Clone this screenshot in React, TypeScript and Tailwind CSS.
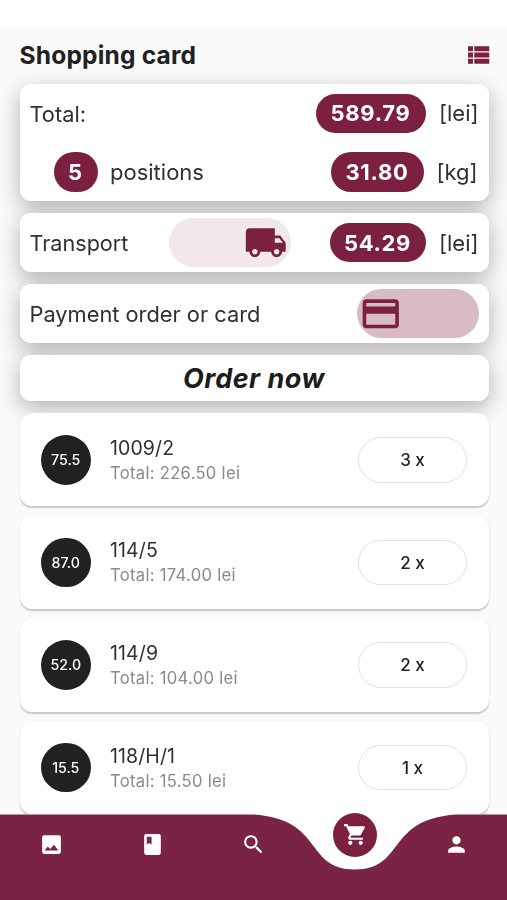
import type { ReactNode } from 'react';
import { MdSearch, MdShoppingCart, MdPerson, MdLocalShipping, MdPayment } from 'react-icons/md';

interface CartItem {
    price: string;
    code: string;
    total: string;
    count: number;
}

const items: CartItem[] = [
    { price: '75.5', code: '1009/2', total: '226.50', count: 3 },
    { price: '87.0', code: '114/5', total: '174.00', count: 2 },
    { price: '52.0', code: '114/9', total: '104.00', count: 2 },
    { price: '15.5', code: '118/H/1', total: '15.50', count: 1 },
];

function Pill({ children, className }: { children: ReactNode; className: string }) {
    return (
        <span
            className={`flex h-[39.4px] items-center justify-center rounded-full bg-[#7b2040] pt-px text-[22px] font-bold tracking-[0.7px] text-white ${className}`}
        >
            {children}
        </span>
    );
}

function Panel({ children, className }: { children: ReactNode; className: string }) {
    return <div className={`rounded-[11px] bg-white pl-[10px] ${className}`}>{children}</div>;
}

function CartRow({ item }: { item: CartItem }) {
    return (
        <div className="flex h-[93px] shrink-0 items-center rounded-[12px] bg-white pr-[21.5px] pl-[21.5px] shadow-[0_1.5px_1.5px_rgba(0,0,0,0.2),0_0_2px_rgba(0,0,0,0.06)]">
            <div className="flex size-[49.5px] items-center justify-center rounded-full bg-[#212121] text-[14.2px] font-medium text-white">
                {item.price}
            </div>
            <div className="ml-[19.5px] flex-1 pt-[2px]">
                <div className="text-[19.5px] leading-[25px] tracking-[0.1px] text-[#303030]">{item.code}</div>
                <div className="text-[16.6px] leading-[25px] tracking-[0.3px] text-[#8a8a8a]">
                    Total: {item.total} lei
                </div>
            </div>
            <button className="h-[45.5px] w-[109px] rounded-full border border-[#e0e0e0] pt-[2px] text-[17px] font-medium text-[#212121]">
                {item.count} x
            </button>
        </div>
    );
}

function ImageIcon() {
    return (
        <svg width="25" height="25" viewBox="0 0 24 24" fill="currentColor" fillRule="evenodd">
            <path d="M5 3h14a2 2 0 0 1 2 2v14a2 2 0 0 1-2 2H5a2 2 0 0 1-2-2V5a2 2 0 0 1 2-2zM5.3 17.8h13.2l-4.1-5.6-3.6 4.2-2.3-2.5z" />
        </svg>
    );
}

function BookIcon() {
    return (
        <svg width="25" height="25" viewBox="0 0 24 24" fill="currentColor" fillRule="evenodd">
            <path d="M6 2h12a2 2 0 0 1 2 2v16a2 2 0 0 1-2 2H6a2 2 0 0 1-2-2V4a2 2 0 0 1 2-2zM6.5 4.5v7.6l2.3-1.6 2.3 1.6V4.5z" />
        </svg>
    );
}

function BottomNav() {
    return (
        <nav className="relative h-[86px] shrink-0 bg-white">
            <svg className="absolute inset-0" width="507" height="86" viewBox="0 0 507 86">
                <path
                    fill="#7b2344"
                    d="M0 .4H253.5C324.5 5 304.2 55.4 354.9 55.4S385.3 5 456.3 .4H507V86H0Z"
                />
            </svg>
            <div className="relative grid grid-cols-5 justify-items-center pt-[18px] pl-[1px] text-white">
                <ImageIcon />
                <BookIcon />
                <MdSearch size={25} />
                <div className="-mt-[19.5px] flex size-[44px] items-center justify-center rounded-full bg-[#7b2040]">
                    <MdShoppingCart size={25} />
                </div>
                <MdPerson size={25} />
            </div>
        </nav>
    );
}

export default function App() {
    return (
        <div className="flex h-[900px] w-[507px] flex-col overflow-hidden bg-[#fafafa] font-[Inter,'Liberation_Sans',sans-serif] text-[#303030]">
            {/* Status bar area */}
            <div className="h-[26px] shrink-0 bg-white" />

            <header className="flex h-[58px] shrink-0 items-center justify-between pr-[14px] pl-[19.5px]">
                <h1 className="text-[24.5px] font-bold tracking-[0.2px] text-[#212121]">Shopping card</h1>
                <svg className="-mt-px" width="30" height="30" viewBox="0 0 24 24" fill="#7b2040">
                    <path d="M4 14h4v-4H4v4zm0 5h4v-4H4v4zM4 9h4V5H4v4zm5 5h12v-4H9v4zm0 5h12v-4H9v4zM9 5v4h12V5H9z" />
                </svg>
            </header>

            <main className="flex h-[730px] shrink-0 flex-col pt-[0.2px] pr-[18.5px] pl-[19.5px] text-[22px]">
                {/* One shadow for the whole group, so it never falls on a panel */}
                <section className="flex shrink-0 flex-col gap-[12px] drop-shadow-[0_7px_11px_rgba(0,0,0,0.29)]">
                    <Panel className="h-[117.2px]">
                        <div className="flex h-[58.6px] items-center">
                            <span className="pt-px text-[21.8px]">Total:</span>
                            <Pill className="ml-auto w-[110px]">589.79</Pill>
                            <span className="ml-[13.5px] w-[49.5px] pt-px">[lei]</span>
                        </div>
                        <div className="flex h-[58.6px] items-center">
                            <Pill className="ml-[24px] w-[44px]">5</Pill>
                            <span className="ml-[12.5px] pt-px">positions</span>
                            <Pill className="ml-auto w-[93px]">31.80</Pill>
                            <span className="ml-[13px] w-[52px] pt-px">[kg]</span>
                        </div>
                    </Panel>

                    <Panel className="flex h-[58.6px] items-center">
                        <span className="w-[139px] pt-px text-[21.6px]">Transport</span>
                        <div className="flex h-[48.5px] w-[122px] items-center justify-end rounded-full bg-[#f2e8ec] pt-px pr-[3px]">
                            <MdLocalShipping size={43.5} color="#7b2040" />
                        </div>
                        <Pill className="ml-auto w-[96px]">54.29</Pill>
                        <span className="ml-[13.5px] w-[49.5px] pt-px">[lei]</span>
                    </Panel>

                    <Panel className="flex h-[58.6px] items-center justify-between pr-[10px]">
                        <span className="pt-[2px] text-[21.8px]">Payment order or card</span>
                        <div className="flex h-[48.5px] w-[122px] items-center rounded-full bg-[#d9bbc7] pt-px pl-[2.5px]">
                            <MdPayment size={43.5} color="#7b2040" />
                        </div>
                    </Panel>

                    <button className="h-[46.8px] rounded-[11px] bg-white pt-[2px] text-[27px] font-bold tracking-[0.5px] text-[#1c1c1c] italic">
                        Order now
                    </button>
                </section>

                <section className="relative mt-[12px] flex flex-col gap-[9.6px]">
                    {items.map((item) => (
                        <CartRow key={item.code} item={item} />
                    ))}
                </section>
            </main>

            <BottomNav />
        </div>
    );
}
